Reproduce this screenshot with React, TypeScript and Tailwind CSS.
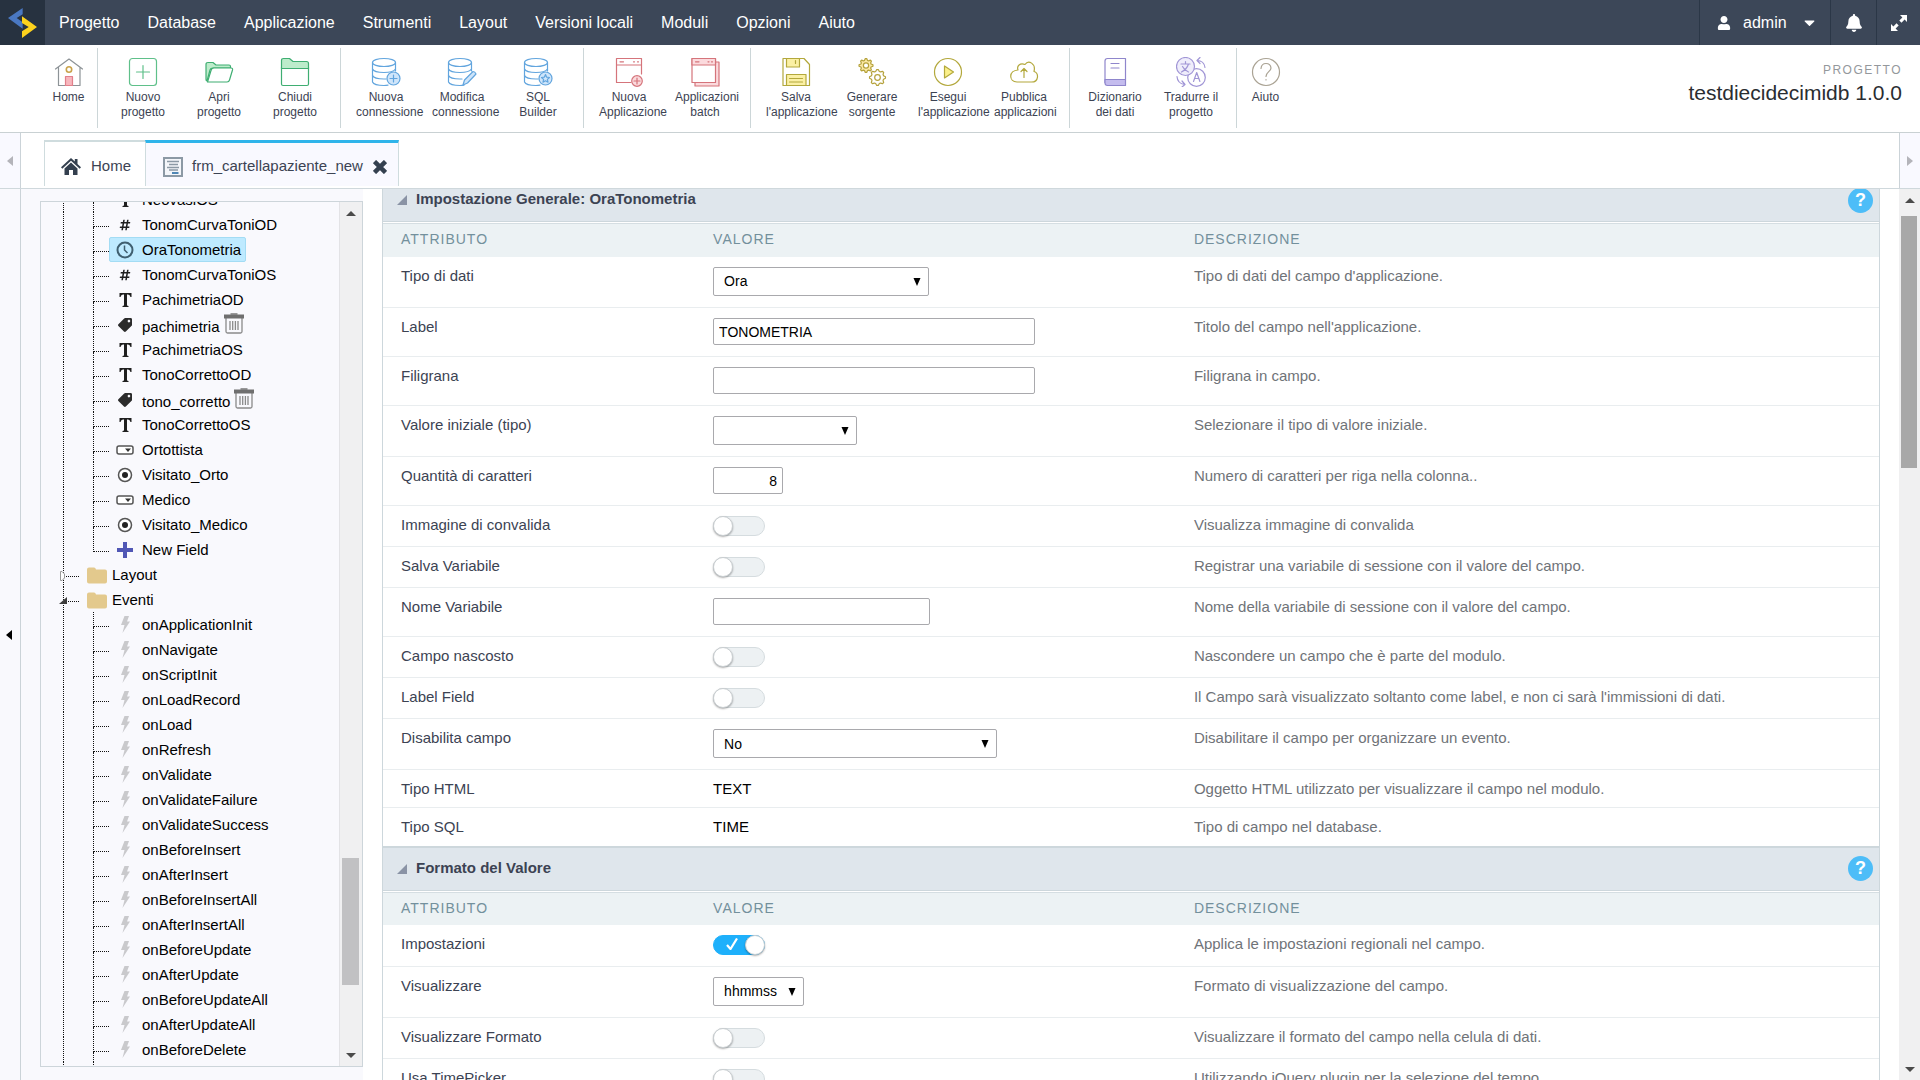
import { useState, type ReactNode } from 'react';
import { FaBell, FaCaretDown, FaHashtag, FaTag, FaUser } from 'react-icons/fa';

const MENU = [
  'Progetto',
  'Database',
  'Applicazione',
  'Strumenti',
  'Layout',
  'Versioni locali',
  'Moduli',
  'Opzioni',
  'Aiuto',
];

/* ---------- toolbar icons ---------- */

function Glyph({ children, color }: { children: ReactNode; color: string }) {
  return (
    <svg
      viewBox="0 0 30 30"
      className="h-[30px] w-[30px] shrink-0"
      fill="none"
      stroke={color}
      strokeWidth="1.2"
      strokeLinejoin="round"
      strokeLinecap="round"
      aria-hidden="true"
    >
      {children}
    </svg>
  );
}

function HomeGlyph() {
  return (
    <Glyph color="#8d9397">
      <path d="M1.5 12 15 2l13.5 10M4.5 10.5V28.5h21.5V10.5" />
      <circle cx="15" cy="12.5" r="2.7" stroke="#c9a24a" strokeWidth="1.6" />
      <path d="M11.500 28.500v-9h7v9z" fill="#f7b6bd" stroke="#e2808b" />
    </Glyph>
  );
}

function NewProjectGlyph() {
  return (
    <Glyph color="#5fc08a">
      <rect x="1.5" y="1.5" width="27" height="27" rx="3" />
      <path d="M15 8.5v13M8.5 15h13" />
    </Glyph>
  );
}

function OpenProjectGlyph() {
  return (
    <Glyph color="#3fae72">
      <path d="M2 22V7.5Q2 5.5 4 5.5h5l3 2.5h13q1.5 0 1.5 1.5V11H9Q6.5 11 6 13L3 24Q2 24 2 22z" fill="#bdeccb" />
      <path d="M3.5 25 7 13.5q.6-2.5 3-2.5h17q2 0 1.5 2L25.5 23q-.5 2-2.5 2z" fill="#fff" />
    </Glyph>
  );
}

function CloseProjectGlyph() {
  return (
    <Glyph color="#3fae72">
      <rect x="1.5" y="9" width="27" height="19.5" rx="1.5" />
      <path d="M1.5 11.5V3.5q0-2 2-2h6l3.5 3h13.5q2 0 2 2v5z" fill="#bdeccb" />
    </Glyph>
  );
}

function Cylinder() {
  return (
    <>
      <ellipse cx="13" cy="5.5" rx="11.5" ry="4" />
      <path d="M1.5 5.5v19.5q1.5 3.5 11.5 3.5 2 0 4-.3M24.5 5.5V14" />
      <path d="M1.5 12q1.5 3.5 11.5 3.5 9 0 11.5-3.5M1.5 18.5q1.5 3.5 11.5 3.5h2" />
    </>
  );
}

function NewConnectionGlyph() {
  return (
    <Glyph color="#62a5de">
      <Cylinder />
      <circle cx="22.5" cy="21.5" r="6.5" fill="#cfe5fa" />
      <path d="M22.5 18v7M19 21.5h7" />
    </Glyph>
  );
}

function EditConnectionGlyph() {
  return (
    <Glyph color="#62a5de">
      <Cylinder />
      <path d="m16 28 1.5-5L26 14.5q2 0 3 2.5L20.5 26z" fill="#cfe5fa" />
    </Glyph>
  );
}

function SqlGlyph() {
  return (
    <Glyph color="#62a5de">
      <Cylinder />
      <circle cx="22.5" cy="21.5" r="6.5" fill="#cfe5fa" />
      <path d="m22.5 17.5 1.2 2.7 2.8.3-2.1 1.9.6 2.8-2.5-1.4-2.5 1.4.6-2.8-2.1-1.9 2.8-.3z" />
    </Glyph>
  );
}

function NewAppGlyph() {
  return (
    <Glyph color="#d5747b">
      <path d="M17 25.5H2.5v-24h25V17M2.5 8h25M6 4.8h3.5M19.5 4.8h1M23.5 4.8h1" />
      <circle cx="23" cy="24" r="5.3" fill="#fbdadd" />
      <path d="M23 21v6M20 24h6" />
    </Glyph>
  );
}

function BatchGlyph() {
  return (
    <Glyph color="#d5747b">
      <path d="M5 25.5v3.5h24V5h-3.5" fill="#fbdadd" />
      <path d="M2 1.5h23.5v24H2z" fill="#fff" />
      <path d="M2 1.5h23.5V8H2z" fill="#fbdadd" />
      <path d="M5.5 4.8H9M18 4.8h1M21.5 4.8h1" />
    </Glyph>
  );
}

function SaveGlyph() {
  return (
    <Glyph color="#b3a83c">
      <path d="M2 1.5h21l5.5 6v21H2z" />
      <path d="M5.5 1.5v8.5h13V1.5zM5.5 28.5V17.5h19.5v11z" fill="#fbf0a4" />
      <path d="M14.5 3.5v3M8.5 21.5h13M8.5 25h13" />
    </Glyph>
  );
}

function cogPath(cx: number, cy: number, outer: number) {
  const points: string[] = [];
  for (let i = 0; i < 32; i++) {
    const r = i % 4 < 2 ? outer : outer - 1.7;
    const a = ((i - 0.5) * Math.PI) / 16;
    points.push(`${(cx + r * Math.cos(a)).toFixed(2)} ${(cy + r * Math.sin(a)).toFixed(2)}`);
  }
  return `M${points.join('L')}z`;
}

function CogsGlyph() {
  return (
    <Glyph color="#b5a23c">
      <path d={cogPath(9, 8.5, 7)} fill="#fbe9a4" />
      <circle cx="9" cy="8.5" r="2.6" fill="#fff" />
      <path d={cogPath(20.5, 20.5, 8)} />
      <circle cx="20.5" cy="20.5" r="2.8" />
    </Glyph>
  );
}

function RunGlyph() {
  return (
    <Glyph color="#b3a83c">
      <circle cx="15" cy="15" r="13.5" />
      <path d="M11.5 9v12l9-6z" fill="#fbf08a" />
    </Glyph>
  );
}

function PublishGlyph() {
  return (
    <Glyph color="#b3a83c">
      <path d="M8 25h14.5c7.5 0 7.5-9 2.5-10.5C27 6.5 19.5 2.5 16 7.5c-5-2-8.5 1.5-7 5.5C-.5 13.5-.5 24.5 8 25z" />
      <path d="M15 20.5V12M12 14.5l3-3 3 3" />
    </Glyph>
  );
}

function DictionaryGlyph() {
  return (
    <Glyph color="#8f86cc">
      <path d="M5 25.5V4q0-2.5 2.5-2.5H25.5v21" />
      <path d="M5 26V22.5h20.5v6H7.5Q5 28.5 5 26z" fill="#c4bcee" />
      <path d="M11 6.5h8M11 11h8" />
    </Glyph>
  );
}

function TranslateGlyph() {
  return (
    <Glyph color="#a196d6">
      <circle cx="20.5" cy="20.5" r="8.8" />
      <circle cx="9.5" cy="9.5" r="9" fill="#efedfb" />
      <path d="M5 7h9M9.5 4.5V7M12.5 7q-1.5 5-7 8M6.5 9.5q2 4 6 5.5M17.5 24.5l3.2-9 3.2 9M18.5 21.5h4.5" />
      <path d="M21 3.5q7 0 8 7M24 .5l-3 3 3 3M1 19.5q.5 7 7.5 8M6 24l3 3.5-3 2.5" />
    </Glyph>
  );
}

function HelpGlyph() {
  return (
    <Glyph color="#aaa394">
      <circle cx="15" cy="15" r="13.5" />
      <path d="M10 11.5q.5-5 5-5t5 4.5c0 3.5-5 4-5 8.5M15 22.5v.5" />
    </Glyph>
  );
}

type Tool = { icon: ReactNode; lines: string[]; narrow?: boolean };

const TOOL_GROUPS: Tool[][] = [
  [{ icon: <HomeGlyph />, lines: ['Home'], narrow: true }],
  [
    { icon: <NewProjectGlyph />, lines: ['Nuovo', 'progetto'] },
    { icon: <OpenProjectGlyph />, lines: ['Apri', 'progetto'] },
    { icon: <CloseProjectGlyph />, lines: ['Chiudi', 'progetto'] },
  ],
  [
    { icon: <NewConnectionGlyph />, lines: ['Nuova', 'connessione'] },
    { icon: <EditConnectionGlyph />, lines: ['Modifica', 'connessione'] },
    { icon: <SqlGlyph />, lines: ['SQL', 'Builder'] },
  ],
  [
    { icon: <NewAppGlyph />, lines: ['Nuova', 'Applicazione'] },
    { icon: <BatchGlyph />, lines: ['Applicazioni', 'batch'] },
  ],
  [
    { icon: <SaveGlyph />, lines: ['Salva', "l'applicazione"] },
    { icon: <CogsGlyph />, lines: ['Generare', 'sorgente'] },
    { icon: <RunGlyph />, lines: ['Esegui', "l'applicazione"] },
    { icon: <PublishGlyph />, lines: ['Pubblica', 'applicazioni'] },
  ],
  [
    { icon: <DictionaryGlyph />, lines: ['Dizionario', 'dei dati'] },
    { icon: <TranslateGlyph />, lines: ['Tradurre il', 'progetto'] },
  ],
  [{ icon: <HelpGlyph />, lines: ['Aiuto'], narrow: true }],
];

function MenuBar() {
  return (
    <header className="flex h-[45px] shrink-0 bg-[#3c4758] text-base text-white">
      <div className="flex w-[45px] items-center justify-center bg-[#273240]">
        <svg viewBox="17 17 96 96" className="h-8 w-8" aria-label="Scriptcase">
          <path d="M64 20v19L46 50l18 13v19L20 50z" fill="#4a78c2" />
          <path d="M62 45l45 32-45 33V90l20-13-20-12z" fill="#fdd21d" />
        </svg>
      </div>
      <nav className="flex flex-1 items-center gap-7 pl-[14px]">
        {MENU.map((item) => (
          <button key={item} type="button">
            {item}
          </button>
        ))}
      </nav>
      <button type="button" className="flex w-[131px] items-center border-l border-[#2b3747] pl-[17px]">
        <FaUser size={14} className="mr-3" />
        admin
        <FaCaretDown size={17} className="ml-[14px]" />
      </button>
      <button
        type="button"
        aria-label="Notifiche"
        className="flex w-[46px] items-center justify-center border-l border-[#2b3747]"
      >
        <FaBell size={18} />
      </button>
      <button
        type="button"
        aria-label="Schermo intero"
        className="flex w-[44px] items-center justify-center border-l border-[#2b3747]"
      >
        <svg viewBox="0 0 16 16" className="h-4 w-4" fill="#fff" aria-hidden="true">
          <path d="M9 0h7v7l-2.4-2.4L10.5 7.7 8.3 5.5l3.1-3.1zM7 16H0V9l2.4 2.4 3.1-3.1 2.2 2.2-3.1 3.1z" />
        </svg>
      </button>
    </header>
  );
}

function Toolbar() {
  return (
    <div className="flex h-[88px] shrink-0 items-start justify-between border-b border-[#c9d1d3] bg-white py-[3px] pl-10">
      <div className="flex">
        {TOOL_GROUPS.map((group, i) => (
          <div key={i} className="flex h-20 items-start border-r border-[#ccd6d8] px-[7px] last:border-r-0">
            {group.map((tool) => (
              <button
                key={tool.lines.join(' ')}
                type="button"
                className={`flex flex-col pt-[9px] ${tool.narrow ? 'w-[43px]' : 'w-[76px] px-2'}`}
              >
                <span className="flex self-center">{tool.icon}</span>
                <span className="mt-[3px] w-full text-center text-xs leading-[15px] whitespace-pre text-[#3c4353]">
                  {tool.lines.join('\n')}
                </span>
              </button>
            ))}
          </div>
        ))}
      </div>
      <div className="pt-[14px] pr-[18px] text-right">
        <div className="text-xs leading-4 tracking-[1.5px] text-[#94989c]">PROGETTO</div>
        <div className="text-[21px] leading-[30px] text-[#2a2d31]">testdiecidecimidb 1.0.0</div>
      </div>
    </div>
  );
}

function Tabs() {
  return (
    <div className="flex h-14 shrink-0 border-b border-[#cfd8dc]">
      <div className="flex w-[21px] items-center justify-center border-r border-[#cbd3d8] bg-[#f9f9ff]">
        <svg viewBox="0 0 6 10" className="h-[10px] w-[6px]" fill="#b4b4ba">
          <path d="M6 0v10L0 5z" />
        </svg>
      </div>
      <div role="tablist" className="flex flex-1 items-end pb-[2px] pl-[23px] text-[15px] text-[#3c4353]">
        <button
          type="button"
          role="tab"
          aria-selected="false"
          className="flex h-[46px] items-center border-t-2 border-l border-[#cfdcde] pt-[4px] pr-[14px] pl-4"
        >
          <svg viewBox="0 0 20 17" className="mr-[10px] h-[17px] w-5" fill="#34404f">
            <path d="M10 0 13.8 3.5V1h2.7v5l3.5 3.3-1.3 1.4L10 2.7 1.3 10.7 0 9.3z" />
            <path d="m10 4.5 6.5 6V17H12v-5H8v5H3.5v-6.5z" />
          </svg>
          Home
        </button>
        <div
          role="tab"
          aria-selected="true"
          className="flex h-[46px] items-center border-x border-t-[3px] border-x-[#cfdcde] border-t-[#2fb4ea] bg-[#f9f9ff] pt-[4px] pr-[11px] pl-[17px]"
        >
          <svg viewBox="0 0 20 20" className="mr-[9px] h-5 w-5" fill="none" stroke="#8c99a5">
            <path d="M1 1h18v18H1z" fill="#f4f6fa" strokeWidth="2" />
            <path d="M4 4.5h12M6 7.5h9M4 10.5h12M6 13h9" strokeWidth="1.5" />
            <path d="M9 16h6.5" stroke="#4f86b5" strokeWidth="2" />
          </svg>
          frm_cartellapaziente_new
          <button type="button" aria-label="Chiudi" className="ml-[10px]">
            <svg viewBox="0 0 14 14" className="h-[14px] w-[14px]" stroke="#34404f" strokeWidth="4.5">
              <path d="m1.5 1.5 11 11M12.5 1.5l-11 11" />
            </svg>
          </button>
        </div>
      </div>
      <div className="flex w-[21px] items-center justify-center border-l border-[#cbd3d8] bg-[#f9f9ff]">
        <svg viewBox="0 0 6 10" className="h-[10px] w-[6px]" fill="#b4b4ba">
          <path d="M0 0v10l6-5z" />
        </svg>
      </div>
    </div>
  );
}

function Scrollbar({ start, size, thumb }: { start: number; size: number; thumb: string }) {
  return (
    <div className="flex flex-col bg-[#f0f0f1]">
      <div className="flex h-[22px] items-center justify-center">
        <svg viewBox="0 0 10 5" className="h-[5px] w-[10px]" fill="#4a4a4a">
          <path d="M0 5h10L5 0z" />
        </svg>
      </div>
      <div className="relative flex-1">
        <div
          className={`absolute right-[3px] left-[2px] ${thumb}`}
          style={{ top: `${start}%`, height: `${size}%` }}
        />
      </div>
      <div className="flex h-[22px] items-center justify-center">
        <svg viewBox="0 0 10 5" className="h-[5px] w-[10px]" fill="#4a4a4a">
          <path d="M0 0h10L5 5z" />
        </svg>
      </div>
    </div>
  );
}

/* ---------- field tree ---------- */

type Kind = 'text' | 'number' | 'time' | 'label' | 'select' | 'radio' | 'add' | 'event';

const FIELDS: [string, Kind][] = [
  ['NeovasiOS', 'text'],
  ['TonomCurvaToniOD', 'number'],
  ['OraTonometria', 'time'],
  ['TonomCurvaToniOS', 'number'],
  ['PachimetriaOD', 'text'],
  ['pachimetria', 'label'],
  ['PachimetriaOS', 'text'],
  ['TonoCorrettoOD', 'text'],
  ['tono_corretto', 'label'],
  ['TonoCorrettoOS', 'text'],
  ['Ortottista', 'select'],
  ['Visitato_Orto', 'radio'],
  ['Medico', 'select'],
  ['Visitato_Medico', 'radio'],
  ['New Field', 'add'],
];

const EVENTS = [
  'onApplicationInit',
  'onNavigate',
  'onScriptInit',
  'onLoadRecord',
  'onLoad',
  'onRefresh',
  'onValidate',
  'onValidateFailure',
  'onValidateSuccess',
  'onBeforeInsert',
  'onAfterInsert',
  'onBeforeInsertAll',
  'onAfterInsertAll',
  'onBeforeUpdate',
  'onAfterUpdate',
  'onBeforeUpdateAll',
  'onAfterUpdateAll',
  'onBeforeDelete',
  'onAfterDelete',
];

function KindIcon({ kind }: { kind: Kind }) {
  switch (kind) {
    case 'number':
      return <FaHashtag size={12} color="#1f1f1f" />;
    case 'label':
      return <FaTag size={14} color="#2b2b2b" className="-scale-x-100" />;
    case 'event':
      return (
        <svg viewBox="0 0 9 17" className="h-[17px] w-[9px]" fill="#c9c9cc">
          <path d="M3.5 0H8L6 5.5h3L1.500 17l2-8H0z" />
        </svg>
      );
    case 'add':
      return (
        <svg viewBox="0 0 16 16" className="h-4 w-4" stroke="#5057b5" strokeWidth="4">
          <path d="M8 0v16M0 8h16" />
        </svg>
      );
    case 'time':
      return (
        <svg viewBox="0 0 18 18" className="h-[18px] w-[18px]" fill="none" stroke="#3f5f70" strokeWidth="2">
          <circle cx="9" cy="9" r="7.5" />
          <path d="M8.5 4.5V9l3 3" strokeWidth="1.5" />
        </svg>
      );
    case 'select':
      return (
        <svg viewBox="0 0 18 10" className="h-[10px] w-[18px]">
          <rect x="1" y="1" width="16" height="8" rx="2" fill="#fff" stroke="#555" strokeWidth="1.5" />
          <path d="M9 3.5h6L12 7z" fill="#333" />
        </svg>
      );
    case 'radio':
      return (
        <svg viewBox="0 0 16 16" className="h-4 w-4">
          <circle cx="8" cy="8" r="6.5" fill="#fff" stroke="#555" strokeWidth="1.5" />
          <circle cx="8" cy="8" r="3" fill="#222" />
        </svg>
      );
    default:
      return (
        <svg viewBox="0 0 13 14" className="h-[14px] w-[13px]" fill="#1f1f1f">
          <path d="M.5 0h12v4h-1q-.5-2.5-2.5-2.5H8V12q0 1 1.5 1v1h-6v-1Q5 13 5 12V1.5H4Q2 1.5 1.5 4h-1z" />
        </svg>
      );
  }
}

function TrashIcon() {
  return (
    <svg viewBox="0 0 20 21" className="h-[21px] w-5" fill="none" stroke="#8a8a8a">
      <path d="M2 5v13.5q0 1.5 1.5 1.5h13q1.5 0 1.5-1.5V5" strokeWidth="1.3" />
      <path d="M6 8v9M8.7 8v9M11.4 8v9M14 8v9" strokeWidth="1.3" />
      <path d="M0 3.5h20" stroke="#6f6f6f" strokeWidth="4" />
      <path d="M6.5 1h7" stroke="#777" strokeWidth="1.5" />
    </svg>
  );
}

function Leaf({ name, kind, last, selected, onSelect }: {
  name: string;
  kind: Kind;
  last?: boolean;
  selected?: boolean;
  onSelect: () => void;
}) {
  return (
    <li className="flex h-[25px]">
      <span className="w-[30px] border-l border-dotted border-[#111]" />
      <span className="flex w-[16px] flex-col">
        <span className="h-[15px] border-b border-l border-dotted border-[#111]" />
        {!last && <span className="flex-1 border-l border-dotted border-[#111]" />}
      </span>
      <button
        type="button"
        onClick={onSelect}
        className={`flex items-center rounded-[2px] border pr-1 whitespace-nowrap ${
          selected ? 'border-[#a3dcf4] bg-[#beeaff]' : 'border-transparent'
        }`}
      >
        <span className="mr-[2px] flex w-[30px] justify-center">
          <KindIcon kind={kind} />
        </span>
        <span className={kind === 'label' ? 'pt-1' : ''}>{name}</span>
        {kind === 'label' && (
          <span className="ml-1 self-start">
            <TrashIcon />
          </span>
        )}
      </button>
    </li>
  );
}

function Folder({ name, open }: { name: string; open?: boolean }) {
  return (
    <div className="relative flex h-[25px]">
      <span className="flex w-4 flex-col">
        <span className="h-[15px] border-b border-l border-dotted border-[#111]" />
        <span className="flex-1 border-l border-dotted border-[#111]" />
      </span>
      <svg viewBox="0 0 8 10" className="absolute top-[9px] -left-1 h-[10px] w-2">
        {open ? (
          <path d="M8 1v7H0z" fill="#3c3c3c" />
        ) : (
          <path d="M1.5.5v9h1.5L5.5 7V3L3 .5z" fill="#fff" stroke="#999" />
        )}
      </svg>
      <button type="button" className="flex items-center pl-2">
        <svg viewBox="0 0 20 17" className="mt-[2px] mr-[5px] h-[17px] w-5" fill="#e3c98d">
          <path d="M0 2.5Q0 .5 2 .5h5q1.5 0 2 2h9q2 0 2 2v10q0 2-2 2H2q-2 0-2-2z" />
        </svg>
        {name}
      </button>
    </div>
  );
}

function FieldTree() {
  const [selected, setSelected] = useState('OraTonometria');
  return (
    <aside className="flex w-[342px] shrink-0 bg-[#f9f9fd] pt-[12px] pb-[13px] pl-[19px]">
      <div className="flex w-full border border-[#cdd5da]">
        <div className="flex-1 overflow-hidden pl-[22px] text-[15px] leading-[21px] text-black">
          <ul className="-mt-[15px]">
            {FIELDS.map(([name, kind], i) => (
              <Leaf
                key={name}
                name={name}
                kind={kind}
                last={i === FIELDS.length - 1}
                selected={selected === name}
                onSelect={() => setSelected(name)}
              />
            ))}
            <li>
              <Folder name="Layout" />
            </li>
            <li>
              <Folder name="Eventi" open />
              <ul>
                {EVENTS.map((name) => (
                  <Leaf
                    key={name}
                    name={name}
                    kind="event"
                    selected={selected === name}
                    onSelect={() => setSelected(name)}
                  />
                ))}
              </ul>
            </li>
          </ul>
        </div>
        <div className="flex w-[23px] border-l border-[#e3e3e6] *:flex-1">
          <Scrollbar start={77.3} size={15.5} thumb="bg-[#c1c1c3]" />
        </div>
      </div>
    </aside>
  );
}

/* ---------- attribute tables ---------- */

type Control =
  | { type: 'select'; value: string; width: string }
  | { type: 'input'; value: string; width: string }
  | { type: 'switch'; on?: boolean }
  | { type: 'static'; value: string };

type Attribute = { id: string; label: string; control: Control; description: string };

const GENERAL: Attribute[] = [
  { id: 'data_type', label: 'Tipo di dati', control: { type: 'select', value: 'Ora', width: 'w-[216px]' }, description: "Tipo di dati del campo d'applicazione." },
  { id: 'label', label: 'Label', control: { type: 'input', value: 'TONOMETRIA', width: 'w-[322px]' }, description: "Titolo del campo nell'applicazione." },
  { id: 'watermark', label: 'Filigrana', control: { type: 'input', value: '', width: 'w-[322px]' }, description: 'Filigrana in campo.' },
  { id: 'initial', label: 'Valore iniziale (tipo)', control: { type: 'select', value: '', width: 'w-[144px]' }, description: 'Selezionare il tipo di valore iniziale.' },
  { id: 'chars', label: 'Quantità di caratteri', control: { type: 'input', value: '8', width: 'w-[70px] text-right' }, description: 'Numero di caratteri per riga nella colonna..' },
  { id: 'validation_image', label: 'Immagine di convalida', control: { type: 'switch' }, description: 'Visualizza immagine di convalida' },
  { id: 'save_var', label: 'Salva Variabile', control: { type: 'switch' }, description: 'Registrar una variabile di sessione con il valore del campo.' },
  { id: 'var_name', label: 'Nome Variabile', control: { type: 'input', value: '', width: 'w-[217px]' }, description: 'Nome della variabile di sessione con il valore del campo.' },
  { id: 'hidden', label: 'Campo nascosto', control: { type: 'switch' }, description: 'Nascondere un campo che è parte del modulo.' },
  { id: 'label_field', label: 'Label Field', control: { type: 'switch' }, description: "Il Campo sarà visualizzato soltanto come label, e non ci sarà l'immissioni di dati." },
  { id: 'disable', label: 'Disabilita campo', control: { type: 'select', value: 'No', width: 'w-[284px]' }, description: 'Disabilitare il campo per organizzare un evento.' },
  { id: 'html_type', label: 'Tipo HTML', control: { type: 'static', value: 'TEXT' }, description: 'Oggetto HTML utilizzato per visualizzare il campo nel modulo.' },
  { id: 'sql_type', label: 'Tipo SQL', control: { type: 'static', value: 'TIME' }, description: 'Tipo di campo nel database.' },
];

const FORMAT: Attribute[] = [
  { id: 'regional', label: 'Impostazioni', control: { type: 'switch', on: true }, description: 'Applica le impostazioni regionali nel campo.' },
  { id: 'display', label: 'Visualizzare', control: { type: 'select', value: 'hhmmss', width: 'w-[91px]' }, description: 'Formato di visualizzazione del campo.' },
  { id: 'show_format', label: 'Visualizzare Formato', control: { type: 'switch' }, description: 'Visualizzare il formato del campo nella celula di dati.' },
  { id: 'time_picker', label: 'Usa TimePicker', control: { type: 'switch' }, description: 'Utilizzando jQuery plugin per la selezione del tempo.' },
];

const ROW_HEIGHT = {
  select: 'h-[51px]',
  input: 'h-[49px]',
  switch: 'h-[41px]',
  static: 'h-[38px]',
};

function Field({ id, control }: { id: string; control: Control }) {
  if (control.type === 'static') {
    return <span className="block pt-2 leading-[22px] text-black">{control.value}</span>;
  }
  if (control.type === 'input') {
    return (
      <input
        id={id}
        type="text"
        defaultValue={control.value}
        className={`mt-[10px] block h-[27px] rounded-[2px] border border-[#a9a9ad] bg-white px-[5px] text-sm text-black ${control.width}`}
      />
    );
  }
  if (control.type === 'select') {
    return (
      <div className={`relative mt-[10px] h-[29px] ${control.width}`}>
        <select
          id={id}
          defaultValue={control.value}
          className="block h-full w-full appearance-none rounded-[2px] border border-[#a9a9ad] bg-white pl-[10px] text-sm text-black"
        >
          <option>{control.value}</option>
        </select>
        <svg
          viewBox="0 0 8 8"
          className="pointer-events-none absolute top-[11px] right-2 h-2 w-2"
          fill="#000"
          aria-hidden="true"
        >
          <path d="M.5 0h7L4 8z" />
        </svg>
      </div>
    );
  }
  return (
    <label className="relative mt-[10px] block h-5 w-[52px]">
      <input id={id} type="checkbox" defaultChecked={control.on} className="peer sr-only" />
      <span className="block h-full rounded-full border border-[#d5dcdf] bg-[#edf1f3] peer-checked:border-[#1eb0fb] peer-checked:bg-[#1eb0fb]" />
      <span className="absolute top-0 left-0 h-5 w-5 rounded-full border border-[#c9ced1] bg-white shadow-[0_1px_2px_#0005] peer-checked:left-8" />
      <svg
        viewBox="0 0 12 12"
        className="absolute top-[3px] left-[13px] hidden h-3 w-3 peer-checked:block"
        fill="none"
        stroke="#fff"
        strokeWidth="2.2"
      >
        <path d="m1 7 3.5 4L11 .5" />
      </svg>
    </label>
  );
}

function Section({ title, rows }: { title: string; rows: Attribute[] }) {
  return (
    <section>
      <div className="flex h-[45px] items-center border-t-2 border-b border-[#cdd7dc] bg-[#dfe6ec] pr-[6px] pl-[14px]">
        <svg viewBox="0 0 10 10" className="mr-[9px] h-[10px] w-[10px]" fill="#8a93a5" aria-hidden="true">
          <path d="M10 0v10H0z" />
        </svg>
        <h2 className="flex-1 pb-[2px] text-[15px] leading-5 font-bold text-[#3c4353]">{title}</h2>
        <button
          type="button"
          aria-label={`Aiuto: ${title}`}
          className="h-[25px] w-[25px] rounded-full bg-[#4dbdf8] text-lg leading-[25px] font-bold text-white"
        >
          ?
        </button>
      </div>
      <table className="mt-px w-full table-fixed border-t border-[#d5dee2] text-left text-[15px]">
        <colgroup>
          <col className="w-[22%]" />
          <col className="w-[30%]" />
          <col />
        </colgroup>
        <thead>
          <tr className="h-[33px] bg-[#ecf2f4] text-sm tracking-[1px] text-[#73909c] *:pb-[2px] *:font-normal">
            <th className="pl-[18px]">ATTRIBUTO</th>
            <th className="pl-px">VALORE</th>
            <th className="pl-[33px]">DESCRIZIONE</th>
          </tr>
        </thead>
        <tbody>
          {rows.map((row) => (
            <tr key={row.id} className={`border-b border-[#e9edef] align-top last:border-b-0 ${ROW_HEIGHT[row.control.type]}`}>
              <td className="pt-2 pl-[18px] leading-[22px] text-[#3c4353]">
                <label htmlFor={row.id}>{row.label}</label>
              </td>
              <td className="pl-px">
                <Field id={row.id} control={row.control} />
              </td>
              <td className="pt-2 pl-[33px] leading-[22px] text-[#6f7378]">{row.description}</td>
            </tr>
          ))}
        </tbody>
      </table>
    </section>
  );
}

export default function App() {
  return (
    <div className="flex h-screen flex-col overflow-hidden bg-white font-['Liberation_Sans',Arial,sans-serif]">
      <MenuBar />
      <Toolbar />
      <Tabs />
      <div className="flex min-h-0 flex-1">
        <button
          type="button"
          aria-label="Comprimi"
          className="flex w-[21px] shrink-0 items-center border-r border-[#cbd3d8] bg-[#f9f9fd] pl-[6px]"
        >
          <svg viewBox="0 0 6 10" className="h-[10px] w-[6px]" fill="#000">
            <path d="M6 0v10L0 5z" />
          </svg>
        </button>
        <FieldTree />
        <main className="min-w-0 flex-1 overflow-hidden pr-[19px] pl-[19px]">
          <div className="-mt-3 border-x border-[#cdd7dc]">
            <Section title="Impostazione Generale: OraTonometria" rows={GENERAL} />
            <Section title="Formato del Valore" rows={FORMAT} />
          </div>
        </main>
        <div className="flex w-[21px] shrink-0 *:flex-1">
          <Scrollbar start={0.6} size={29.7} thumb="bg-[#a8a8a8]" />
        </div>
      </div>
    </div>
  );
}
